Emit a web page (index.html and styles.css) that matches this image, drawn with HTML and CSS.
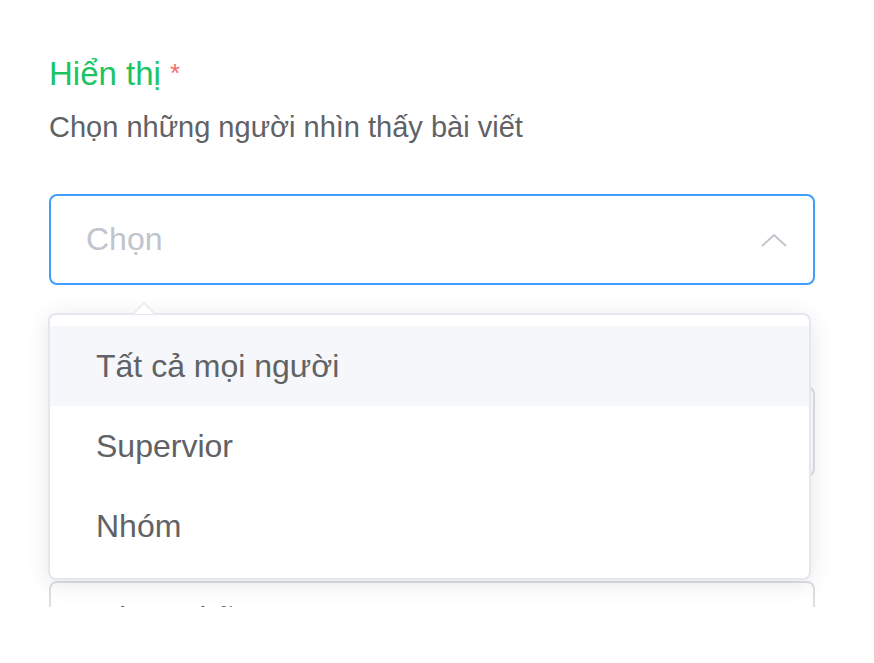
FILE: index.html
```html
<!DOCTYPE html>
<html lang="vi">
<head>
  <meta charset="UTF-8">
  <title>Hiển thị</title>
  <link rel="stylesheet" href="styles.css">
</head>
<body>
  <div class="form">
    <!-- Visibility field -->
    <div class="field">
      <div class="label">Hiển thị <span class="required">*</span></div>
      <div class="hint">Chọn những người nhìn thấy bài viết</div>
      <div class="select is-focus">
        <span class="placeholder">Chọn</span>
        <svg class="caret" width="28" height="16" viewBox="0 0 28 16">
          <polyline points="2,14 14,3 26,14" fill="none" stroke="#c0c4cc" stroke-width="2"/>
        </svg>
      </div>
    </div>

    <!-- Fields hidden behind the dropdown -->
    <div class="field field-second">
      <div class="input"></div>
    </div>
    <div class="field field-third">
      <div class="input"><span class="value">Chọn những</span></div>
    </div>

    <!-- Dropdown -->
    <div class="dropdown">
      <span class="arrow"></span>
      <ul class="options">
        <li class="option hover">Tất cả mọi người</li>
        <li class="option">Supervior</li>
        <li class="option">Nhóm</li>
      </ul>
    </div>
  </div>
</body>
</html>
```

FILE: styles.css
```css
body {
  margin: 0;
  font-family: "Liberation Sans", Arial, sans-serif;
  background: #fff;
}

.form {
  position: relative;
  box-sizing: border-box;
  height: 607px;
  overflow: hidden;
  padding: 50px 59px 0 49px;
}

.label {
  font-size: 33px;
  line-height: 46px;
  color: #1cc464;
}

.required {
  color: #f56c6c;
  font-size: 26px;
  vertical-align: 3px;
}

.hint {
  margin-top: 11px;
  font-size: 29px;
  line-height: 38px;
  color: #606266;
}

.select,
.input {
  box-sizing: border-box;
  height: 91px;
  border: 2px solid #dcdfe6;
  border-radius: 8px;
  display: flex;
  align-items: center;
  padding: 0 25px 0 35px;
  font-size: 32px;
  color: #606266;
}

.select {
  margin-top: 48px;
}

.select.is-focus {
  border-color: #409eff;
}

.placeholder {
  flex: 1;
  color: #c0c4cc;
}

.field-second .input {
  margin-top: 101px;
}

.field-third .input {
  margin-top: 104px;
  align-items: flex-start;
}

.value {
  margin-top: 17px;
  padding-left: 10px;
}

.dropdown {
  position: absolute;
  top: 313px;
  left: 48px;
  width: 763px;
  height: 267px;
  box-sizing: border-box;
  background: #fff;
  border: 2px solid #e4e7ed;
  border-radius: 8px;
  box-shadow: 0 4px 24px 0 rgba(0, 0, 0, 0.1);
}

.arrow {
  position: absolute;
  top: -13px;
  left: 82px;
  width: 0;
  height: 0;
  border-left: 12px solid transparent;
  border-right: 12px solid transparent;
  border-bottom: 12px solid #e4e7ed;
}

.arrow::after {
  content: "";
  position: absolute;
  top: 2px;
  left: -10px;
  border-left: 10px solid transparent;
  border-right: 10px solid transparent;
  border-bottom: 10px solid #fff;
}

.options {
  list-style: none;
  margin: 0;
  padding: 11px 0;
}

.option {
  height: 80px;
  line-height: 80px;
  padding: 0 46px;
  font-size: 32px;
  color: #606266;
}

.option.hover {
  background: #f5f7fa;
}
```
